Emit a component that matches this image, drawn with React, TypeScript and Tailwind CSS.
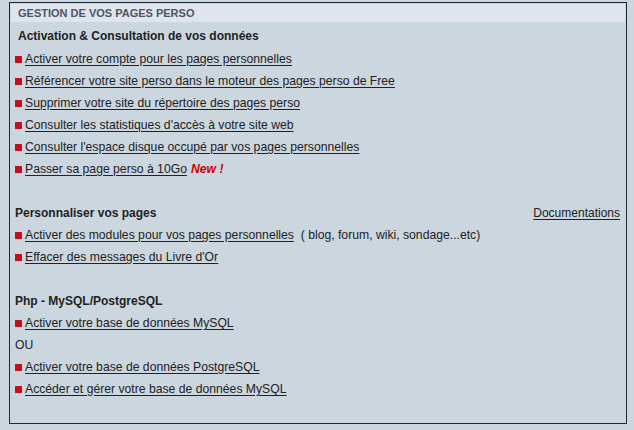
const sections = [
  {
    title: 'Activation & Consultation de vos données',
    indent: true,
    items: [
      { label: 'Activer votre compte pour les pages personnelles' },
      { label: 'Référencer votre site perso dans le moteur des pages perso de Free' },
      { label: 'Supprimer votre site du répertoire des pages perso' },
      { label: "Consulter les statistiques d'accès à votre site web" },
      { label: "Consulter l'espace disque occupé par vos pages personnelles" },
      { label: 'Passer sa page perso à 10Go', isNew: true },
    ],
  },
];

function Bullet({ children }: { children: React.ReactNode }) {
  return (
    <div className="flex h-[22px] items-center">
      <span className="mr-[3px] inline-block h-[7px] w-[7px] shrink-0 bg-[#c4101c]" />
      {children}
    </div>
  );
}

function Link({ children }: { children: React.ReactNode }) {
  return <a className="cursor-pointer text-[#222] underline underline-offset-[2px]">{children}</a>;
}

export default function App() {
  const first = sections[0];

  return (
    <div
      className="h-[430px] w-full bg-[#cbd6df] pl-[9px] pt-[2px] text-[12.2px] text-[#222]"
      style={{ fontFamily: '"Liberation Sans", Arial, sans-serif' }}
    >
      <div className="h-[422px] w-[618px] border border-[#1e2935] px-px pt-px">
        <div className="flex h-[18px] items-center bg-[#dfe4ed] pl-[7px] text-[11px] font-bold text-[#4b5664]">
          GESTION DE VOS PAGES PERSO
        </div>

        <div className="mt-[3px] pl-[4px] pr-[5px]">
          <div className="flex h-[22px] items-center pl-[3px] text-[12px] font-bold text-[#222]">
            {first.title}
          </div>
          <div className="mt-px">
            {first.items.map((item) => (
              <Bullet key={item.label}>
                <Link>{item.label}</Link>
                {item.isNew && <span className="ml-[4px] font-bold italic text-[#cc0000]">New !</span>}
              </Bullet>
            ))}

            <div className="h-[22px]" />

            <div className="flex h-[22px] items-center justify-between text-[12px]">
              <span className="font-bold">Personnaliser vos pages</span>
              <Link>Documentations</Link>
            </div>
            <Bullet>
              <Link>Activer des modules pour vos pages personnelles</Link>
              <span className="whitespace-pre">{'  ( blog, forum, wiki, sondage...etc)'}</span>
            </Bullet>
            <Bullet>
              <Link>Effacer des messages du Livre d'Or</Link>
            </Bullet>

            <div className="h-[22px]" />

            <div className="flex h-[22px] items-center text-[12px] font-bold">Php - MySQL/PostgreSQL</div>
            <Bullet>
              <Link>Activer votre base de données MySQL</Link>
            </Bullet>
            <div className="flex h-[22px] items-center">OU</div>
            <Bullet>
              <Link>Activer votre base de données PostgreSQL</Link>
            </Bullet>
            <Bullet>
              <Link>Accéder et gérer votre base de données MySQL</Link>
            </Bullet>
          </div>
        </div>
      </div>
    </div>
  );
}
